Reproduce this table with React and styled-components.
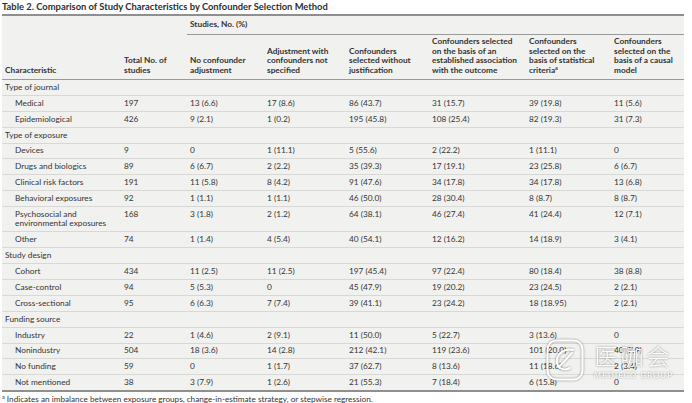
import React from "react";
import styled, { createGlobalStyle } from "styled-components";

const Global = createGlobalStyle`
  html, body { margin: 0; padding: 0; background: #fff; }
  body { font-family: Lato, "Open Sans", sans-serif; color: #333; }
`;

const Page = styled.div`
  position: relative;
  width: 692px;
  height: 403px;
  padding: 1px 0 0 2px;
  box-sizing: border-box;
  overflow: hidden;
`;

const Title = styled.div`
  font-size: 9.4px;
  font-weight: 700;
  line-height: 12px;
  height: 13px;
  color: #2e2e2e;
`;

const Table = styled.table`
  width: 682px;
  border-collapse: collapse;
  table-layout: fixed;
  background: #f1f1ef;
  border-top: 2px solid #8f8f8f;
  border-bottom: 2px solid #8f8f8f;
  font-size: 8.3px;
`;

const Th = styled.th`
  text-align: left;
  vertical-align: bottom;
  font-weight: 700;
  color: #333;
  line-height: 9.4px;
  padding: 0 3px 4px 3px;
  border-bottom: ${(p) => (p.$line ? "1px solid #9a9a9a" : "none")};
  height: ${(p) => p.$h || "auto"};
`;

const Td = styled.td`
  line-height: 9.6px;
  padding: 2.9px 3px 2.4px ${(p) => (p.$indent ? "13px" : "3px")};
  vertical-align: top;
  color: #353535;
`;

const Row = styled.tr`
  border-bottom: 1px solid #d8d8d6;
`;

const Footnote = styled.div`
  font-size: 8.2px;
  line-height: 10px;
  margin-top: 2px;
  color: #333;
`;

const Sup = styled.sup`
  font-size: 5.5px;
  line-height: 0;
  vertical-align: 3px;
`;

const Watermark = styled.div`
  position: absolute;
  left: 546px;
  top: 339px;
  display: flex;
  align-items: flex-start;
  gap: 10px;
  pointer-events: none;
  filter: drop-shadow(0 0 0.8px rgba(0, 0, 0, 0.45));
`;

const WmText = styled.div`
  display: flex;
  flex-direction: column;
  align-items: center;
  padding-top: 2px;
`;

const WmCn = styled.div`
  font-family: "Noto Sans CJK SC", sans-serif;
  font-weight: 300;
  font-size: 23px;
  line-height: 28px;
  letter-spacing: 3px;
  color: rgba(255, 255, 255, 0.95);
`;

const WmEn = styled.div`
  font-family: Lato, sans-serif;
  font-size: 7.5px;
  line-height: 9px;
  letter-spacing: 1.3px;
  color: rgba(255, 255, 255, 0.95);
  margin-top: 2px;
`;

const widths = [119, 66, 77, 82, 83, 97, 85, 73];

const sections = [
  {
    name: "Type of journal",
    rows: [
      ["Medical", "197", "13 (6.6)", "17 (8.6)", "86 (43.7)", "31 (15.7)", "39 (19.8)", "11 (5.6)"],
      ["Epidemiological", "426", "9 (2.1)", "1 (0.2)", "195 (45.8)", "108 (25.4)", "82 (19.3)", "31 (7.3)"],
    ],
  },
  {
    name: "Type of exposure",
    rows: [
      ["Devices", "9", "0", "1 (11.1)", "5 (55.6)", "2 (22.2)", "1 (11.1)", "0"],
      ["Drugs and biologics", "89", "6 (6.7)", "2 (2.2)", "35 (39.3)", "17 (19.1)", "23 (25.8)", "6 (6.7)"],
      ["Clinical risk factors", "191", "11 (5.8)", "8 (4.2)", "91 (47.6)", "34 (17.8)", "34 (17.8)", "13 (6.8)"],
      ["Behavioral exposures", "92", "1 (1.1)", "1 (1.1)", "46 (50.0)", "28 (30.4)", "8 (8.7)", "8 (8.7)"],
      [["Psychosocial and", "environmental exposures"], "168", "3 (1.8)", "2 (1.2)", "64 (38.1)", "46 (27.4)", "41 (24.4)", "12 (7.1)"],
      ["Other", "74", "1 (1.4)", "4 (5.4)", "40 (54.1)", "12 (16.2)", "14 (18.9)", "3 (4.1)"],
    ],
  },
  {
    name: "Study design",
    rows: [
      ["Cohort", "434", "11 (2.5)", "11 (2.5)", "197 (45.4)", "97 (22.4)", "80 (18.4)", "38 (8.8)"],
      ["Case-control", "94", "5 (5.3)", "0", "45 (47.9)", "19 (20.2)", "23 (24.5)", "2 (2.1)"],
      ["Cross-sectional", "95", "6 (6.3)", "7 (7.4)", "39 (41.1)", "23 (24.2)", "18 (18.95)", "2 (2.1)"],
    ],
  },
  {
    name: "Funding source",
    rows: [
      ["Industry", "22", "1 (4.6)", "2 (9.1)", "11 (50.0)", "5 (22.7)", "3 (13.6)", "0"],
      ["Nonindustry", "504", "18 (3.6)", "14 (2.8)", "212 (42.1)", "119 (23.6)", "101 (20.0)", "40 (7.9)"],
      ["No funding", "59", "0", "1 (1.7)", "37 (62.7)", "8 (13.6)", "11 (18.6)", "2 (3.4)"],
      ["Not mentioned", "38", "3 (7.9)", "1 (2.6)", "21 (55.3)", "7 (18.4)", "6 (15.8)", "0"],
    ],
  },
];

const BrLines = ({ lines }) =>
  lines.map((l, i) => (
    <React.Fragment key={i}>
      {i > 0 && <br />}
      {l}
    </React.Fragment>
  ));

export default function App() {
  return (
    <>
      <Global />
      <Page>
        <Title>Table 2. Comparison of Study Characteristics by Confounder Selection Method</Title>
        <Table>
          <colgroup>
            {widths.map((w, i) => (
              <col key={i} style={{ width: w }} />
            ))}
          </colgroup>
          <thead>
            <tr>
              <Th $h="14px" />
              <Th />
              <Th colSpan={6} $line>Studies, No. (%)</Th>
            </tr>
            <tr>
              <Th $line $h="41px">Characteristic</Th>
              <Th $line>
                <BrLines lines={["Total No. of", "studies"]} />
              </Th>
              <Th $line>
                <BrLines lines={["No confounder", "adjustment"]} />
              </Th>
              <Th $line>
                <BrLines lines={["Adjustment with", "confounders not", "specified"]} />
              </Th>
              <Th $line>
                <BrLines lines={["Confounders", "selected without", "justification"]} />
              </Th>
              <Th $line>
                <BrLines
                  lines={["Confounders selected", "on the basis of an", "established association", "with the outcome"]}
                />
              </Th>
              <Th $line>
                Confounders
                <br />
                selected on the
                <br />
                basis of statistical
                <br />
                criteria<Sup>a</Sup>
              </Th>
              <Th $line>
                <BrLines lines={["Confounders", "selected on the", "basis of a causal", "model"]} />
              </Th>
            </tr>
          </thead>
          <tbody>
            {sections.map((s) => (
              <React.Fragment key={s.name}>
                <Row>
                  <Td colSpan={8}>{s.name}</Td>
                </Row>
                {s.rows.map((r, i) => (
                  <Row key={i}>
                    {r.map((c, j) => (
                      <Td key={j} $indent={j === 0}>
                        {Array.isArray(c) ? <BrLines lines={c} /> : c}
                      </Td>
                    ))}
                  </Row>
                ))}
              </React.Fragment>
            ))}
          </tbody>
        </Table>
        <Footnote>
          <Sup>a</Sup> Indicates an imbalance between exposure groups, change-in-estimate strategy, or stepwise regression.
        </Footnote>
        <Watermark>
          <svg width="38" height="42" viewBox="0 0 38 42" fill="none">
            <rect x="1.5" y="1.5" width="35" height="39" rx="9" stroke="#fff" strokeWidth="2" />
            <path
              d="M27 11 C 18 9, 10 15, 11 24 C 12 30, 18 32, 24 29 M13 28 L26 14"
              stroke="#fff"
              strokeWidth="2"
              strokeLinecap="round"
            />
          </svg>
          <WmText>
            <WmCn>医咖会</WmCn>
            <WmEn>MEDIECO GROUP</WmEn>
          </WmText>
        </Watermark>
      </Page>
    </>
  );
}
